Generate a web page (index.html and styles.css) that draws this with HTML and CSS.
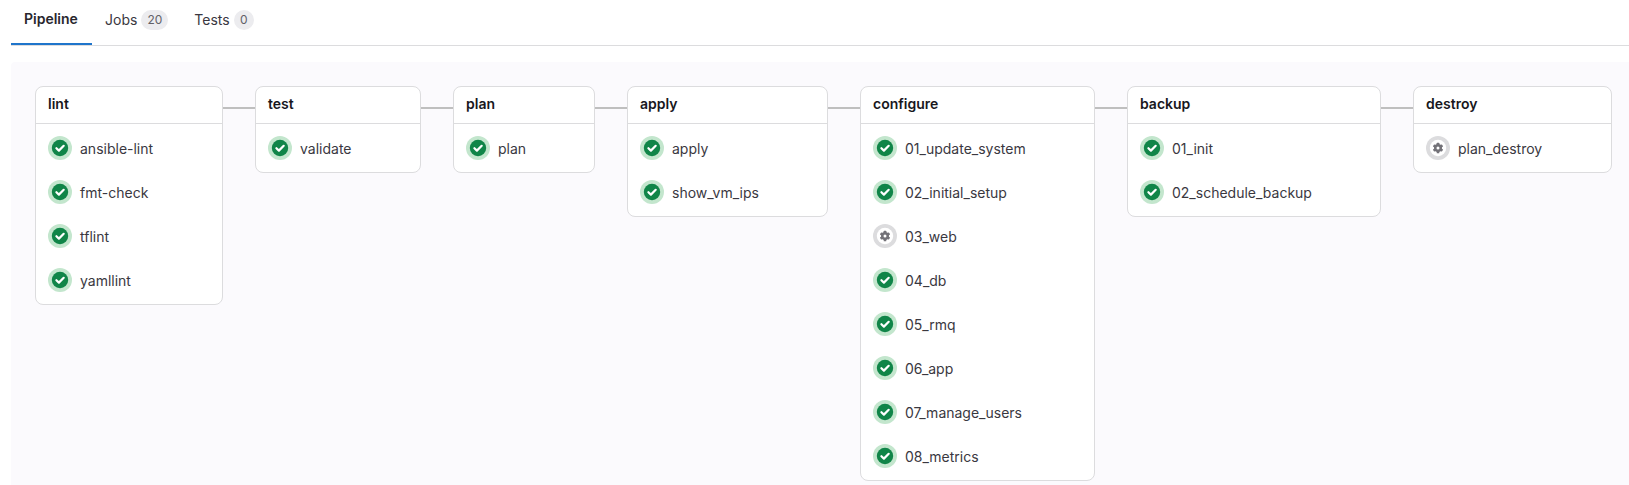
FILE: index.html
```html
<!DOCTYPE html>
<html lang="en">
<head>
<meta charset="utf-8">
<title>Pipeline</title>
<link rel="stylesheet" href="styles.css">
</head>
<body>
<svg class="defs" width="0" height="0" aria-hidden="true">
  <symbol id="ok" viewBox="0 0 24 24">
    <circle cx="12" cy="12" r="12" fill="#c3e6cd"/>
    <circle cx="12" cy="12" r="8.2" fill="#108548"/>
    <path d="M8.4 12.2l2.5 2.4 4.8-4.8" fill="none" stroke="#fff" stroke-width="2.2" stroke-linecap="round" stroke-linejoin="round"/>
  </symbol>
  <symbol id="manual" viewBox="0 0 24 24">
    <circle cx="12" cy="12" r="12" fill="#dcdcde"/>
    <circle cx="12" cy="12" r="8.2" fill="#fff"/>
    <g fill="#737278">
      <circle cx="12" cy="12" r="4"/>
      <rect x="10.7" y="6.8" width="2.6" height="10.4" rx=".5"/>
      <rect x="10.7" y="6.8" width="2.6" height="10.4" rx=".5" transform="rotate(60 12 12)"/>
      <rect x="10.7" y="6.8" width="2.6" height="10.4" rx=".5" transform="rotate(120 12 12)"/>
    </g>
    <circle cx="12" cy="12" r="1.5" fill="#fff"/>
  </symbol>
</svg>
<nav class="tabs">
  <a class="tab tab-active">Pipeline</a>
  <a class="tab">Jobs<span class="badge badge-wide">20</span></a>
  <a class="tab">Tests<span class="badge">0</span></a>
</nav>
<main class="panel">
  <div class="graph">
    <section class="stage w-lint">
      <h2>lint</h2>
      <ul>
        <li><svg class="ic"><use href="#ok"/></svg>ansible-lint</li>
        <li><svg class="ic"><use href="#ok"/></svg>fmt-check</li>
        <li><svg class="ic"><use href="#ok"/></svg>tflint</li>
        <li><svg class="ic"><use href="#ok"/></svg>yamllint</li>
      </ul>
    </section>
    <section class="stage w-test">
      <h2>test</h2>
      <ul>
        <li><svg class="ic"><use href="#ok"/></svg>validate</li>
      </ul>
    </section>
    <section class="stage w-plan">
      <h2>plan</h2>
      <ul>
        <li><svg class="ic"><use href="#ok"/></svg>plan</li>
      </ul>
    </section>
    <section class="stage w-apply">
      <h2>apply</h2>
      <ul>
        <li><svg class="ic"><use href="#ok"/></svg>apply</li>
        <li><svg class="ic"><use href="#ok"/></svg>show_vm_ips</li>
      </ul>
    </section>
    <section class="stage w-configure">
      <h2>configure</h2>
      <ul>
        <li><svg class="ic"><use href="#ok"/></svg>01_update_system</li>
        <li><svg class="ic"><use href="#ok"/></svg>02_initial_setup</li>
        <li><svg class="ic"><use href="#manual"/></svg>03_web</li>
        <li><svg class="ic"><use href="#ok"/></svg>04_db</li>
        <li><svg class="ic"><use href="#ok"/></svg>05_rmq</li>
        <li><svg class="ic"><use href="#ok"/></svg>06_app</li>
        <li><svg class="ic"><use href="#ok"/></svg>07_manage_users</li>
        <li><svg class="ic"><use href="#ok"/></svg>08_metrics</li>
      </ul>
    </section>
    <section class="stage w-backup">
      <h2>backup</h2>
      <ul>
        <li><svg class="ic"><use href="#ok"/></svg>01_init</li>
        <li><svg class="ic"><use href="#ok"/></svg>02_schedule_backup</li>
      </ul>
    </section>
    <section class="stage w-destroy">
      <h2>destroy</h2>
      <ul>
        <li><svg class="ic"><use href="#manual"/></svg>plan_destroy</li>
      </ul>
    </section>
  </div>
</main>
</body>
</html>
```
FILE: styles.css
```css
* { box-sizing: border-box; }
html, body { margin: 0; height: 100%; }
body {
  background: #fff;
  color: #3a383f;
  font-family: Inter, "Liberation Sans", sans-serif;
  font-size: 14px;
  overflow: hidden;
}
.defs { position: absolute; }
.tabs {
  display: flex;
  height: 46px;
  margin-left: 11px;
  border-bottom: 1px solid #dcdcde;
}
.tab {
  display: flex;
  align-items: center;
  height: 45px;
  padding: 0 13px 5px;
  color: #3a383f;
  font-size: 14px;
  line-height: 20px;
}
.tab-active {
  width: 81px;
  font-weight: 600;
  color: #28272d;
  border-bottom: 2px solid #1f75cb;
}
.badge {
  display: inline-flex;
  align-items: center;
  justify-content: center;
  width: 20px;
  height: 20px;
  margin-left: 4px;
  border-radius: 10px;
  background: #ececef;
  color: #626168;
  font-size: 12px;
}
.badge-wide { width: 27px; }
.panel {
  margin: 16px 0 0 11px;
  height: 440px;
  padding: 24px;
  background: #fbfafd;
  border-radius: 4px 0 0 0;
}
.graph {
  display: flex;
  align-items: flex-start;
  gap: 32px;
}
.stage {
  position: relative;
  flex: none;
  background: #fff;
  border: 1px solid #dcdcde;
  border-radius: 8px;
}
.stage + .stage::before {
  content: "";
  position: absolute;
  left: -33px;
  top: 20px;
  width: 32px;
  height: 2px;
  background: #bfbfbf;
}
.stage h2 {
  margin: 0;
  height: 37px;
  padding: 0 12px;
  border-bottom: 1px solid #dcdcde;
  color: #18171d;
  font-size: 14px;
  font-weight: 600;
  line-height: 34px;
}
.stage ul {
  list-style: none;
  margin: 0;
  padding: 2px 0;
}
.stage li {
  display: flex;
  align-items: center;
  height: 44px;
  padding: 0 12px;
  white-space: nowrap;
}
.ic {
  flex: none;
  width: 24px;
  height: 24px;
  margin-right: 8px;
}
.w-lint { width: 188px; }
.w-test { width: 166px; }
.w-plan { width: 142px; }
.w-apply { width: 201px; }
.w-configure { width: 235px; }
.w-backup { width: 254px; }
.w-destroy { width: 199px; }
```
